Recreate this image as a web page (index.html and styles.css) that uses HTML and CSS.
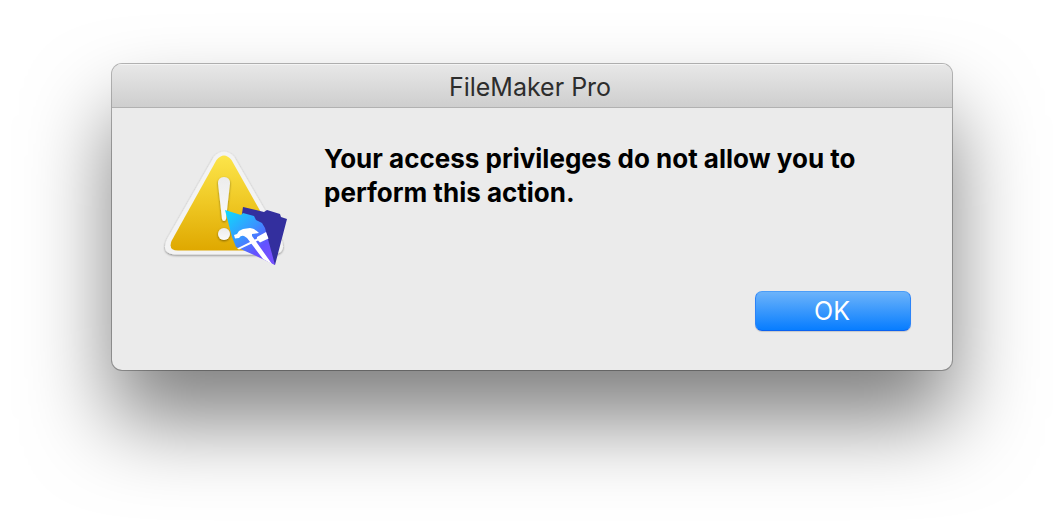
FILE: index.html
```html
<!DOCTYPE html>
<html lang="en">
<head>
<meta charset="utf-8">
<meta name="viewport" content="width=device-width, initial-scale=1">
<title>FileMaker Pro</title>
<link rel="stylesheet" href="styles.css">
</head>
<body>
<main class="dialog" role="alertdialog" aria-labelledby="dialog-title" aria-describedby="dialog-message">
  <header class="titlebar"><h1 class="title" id="dialog-title">FileMaker Pro</h1></header>
  <div class="content">
    <svg class="alert-icon" viewBox="0 0 140 135" aria-hidden="true">
      <defs>
        <linearGradient id="yellow" x1="0" y1="0" x2="0" y2="1">
          <stop offset="0" stop-color="#fce54a"/>
          <stop offset="0.5" stop-color="#efc824"/>
          <stop offset="1" stop-color="#dfa800"/>
        </linearGradient>
        <linearGradient id="folder" gradientUnits="userSpaceOnUse" x1="72" y1="74" x2="112" y2="118">
          <stop offset="0" stop-color="#12d4fc"/>
          <stop offset="0.45" stop-color="#3896ff"/>
          <stop offset="0.8" stop-color="#6352ff"/>
          <stop offset="1" stop-color="#7550ff"/>
        </linearGradient>
        <linearGradient id="mark" x1="0" y1="0" x2="0" y2="1">
          <stop offset="0" stop-color="#ececec"/>
          <stop offset="1" stop-color="#fafafa"/>
        </linearGradient>
        <filter id="soft" x="-20%" y="-20%" width="140%" height="140%">
          <feDropShadow dx="0" dy="1" stdDeviation="1" flood-color="#000" flood-opacity="0.45"/>
        </filter>
      </defs>
      <path d="M59 16.500Q69 6.500 79 16.500L126 98Q133 114.500 116 114.500H22Q5 114.500 12 99Z" fill="#f3f3f3" filter="url(#soft)"/>
      <path d="M61.500 20Q69 11 76.500 20L121.500 100Q125 110.500 115 110.500H23Q13 110.500 16.500 101Z" fill="url(#yellow)"/>
      <g fill="url(#mark)" filter="url(#soft)">
        <path d="M63 43.500Q63 37 69 37Q75 37 75 43.500L71 79Q70.500 81 69 81Q67.500 81 67 79Z"/>
        <circle cx="69" cy="94" r="6"/>
      </g>
      <path d="M88 67L109 72L112 70L125 74L126 77L132 79L120 125L99 110L86 80Z" fill="#332f9e"/>
      <path d="M70 70L86 75L88 73L99 76L101 80L107 83L110 88L120 125L99 115L81 107L77 97Z" fill="url(#folder)"/>
      <g fill="#fff">
        <path d="M79 95L82 94L84 91L88 89L95 88Q101 89 104 93L97 94L97 96L117 124L108 119L92 98L89 96Q86 95 84 98L80 98.500Z"/>
        <path d="M82 108.500L102 98.500L102 97L111 92L113.500 98.500L105 102.500L103 100.500L84 109.500Z"/>
      </g>
    </svg>
    <p class="message" id="dialog-message">Your access privileges do not allow you to perform this action.</p>
    <button class="ok" type="button" autofocus>OK</button>
  </div>
</main>
</body>
</html>
```
FILE: styles.css
```css
* { box-sizing: border-box; }

body {
  margin: 0;
  padding: 64px 112px 160px;
  background: #fff;
  font-family: Inter, "Liberation Sans", sans-serif;
}

.dialog {
  overflow: hidden;
  border-radius: 10px;
  background: #ebebeb;
  box-shadow: 0 0 0 1px rgba(0, 0, 0, 0.28), 0 50px 84px rgba(0, 0, 0, 0.5);
}

.titlebar {
  height: 44px;
  padding-right: 4px;
  border-bottom: 1px solid #b1b1b1;
  background: linear-gradient(#e8e8e8, #cecece);
  box-shadow: inset 0 1px #f4f4f4;
  text-align: center;
}

.title {
  margin: 0;
  color: #2d2d2d;
  font-size: 25px;
  font-weight: 400;
  line-height: 46px;
}

.content {
  display: grid;
  grid-template-columns: 140px 1fr;
  column-gap: 29px;
  padding: 32px 41px 39px 43px;
}

.alert-icon {
  width: 140px;
  height: 135px;
}

.message {
  margin: 2px 0 0;
  color: #000;
  font-size: 26px;
  font-weight: 700;
  line-height: 34px;
}

.ok {
  grid-column: 2;
  justify-self: end;
  width: 156px;
  height: 40px;
  margin-top: 16px;
  padding: 0 2px 0 0;
  border: 1px solid;
  border-color: #4b9df8 #2b83f8 #0b62f0;
  border-radius: 7px;
  background: linear-gradient(#6cb3fa, #077dff);
  box-shadow: 0 1px 1px rgba(0, 0, 0, 0.15);
  color: #fff;
  font: 400 25px/38px Inter, "Liberation Sans", sans-serif;
}

.ok:focus { outline: none; }
.ok:active { background: linear-gradient(#4b9df8, #0064e0); }
```
